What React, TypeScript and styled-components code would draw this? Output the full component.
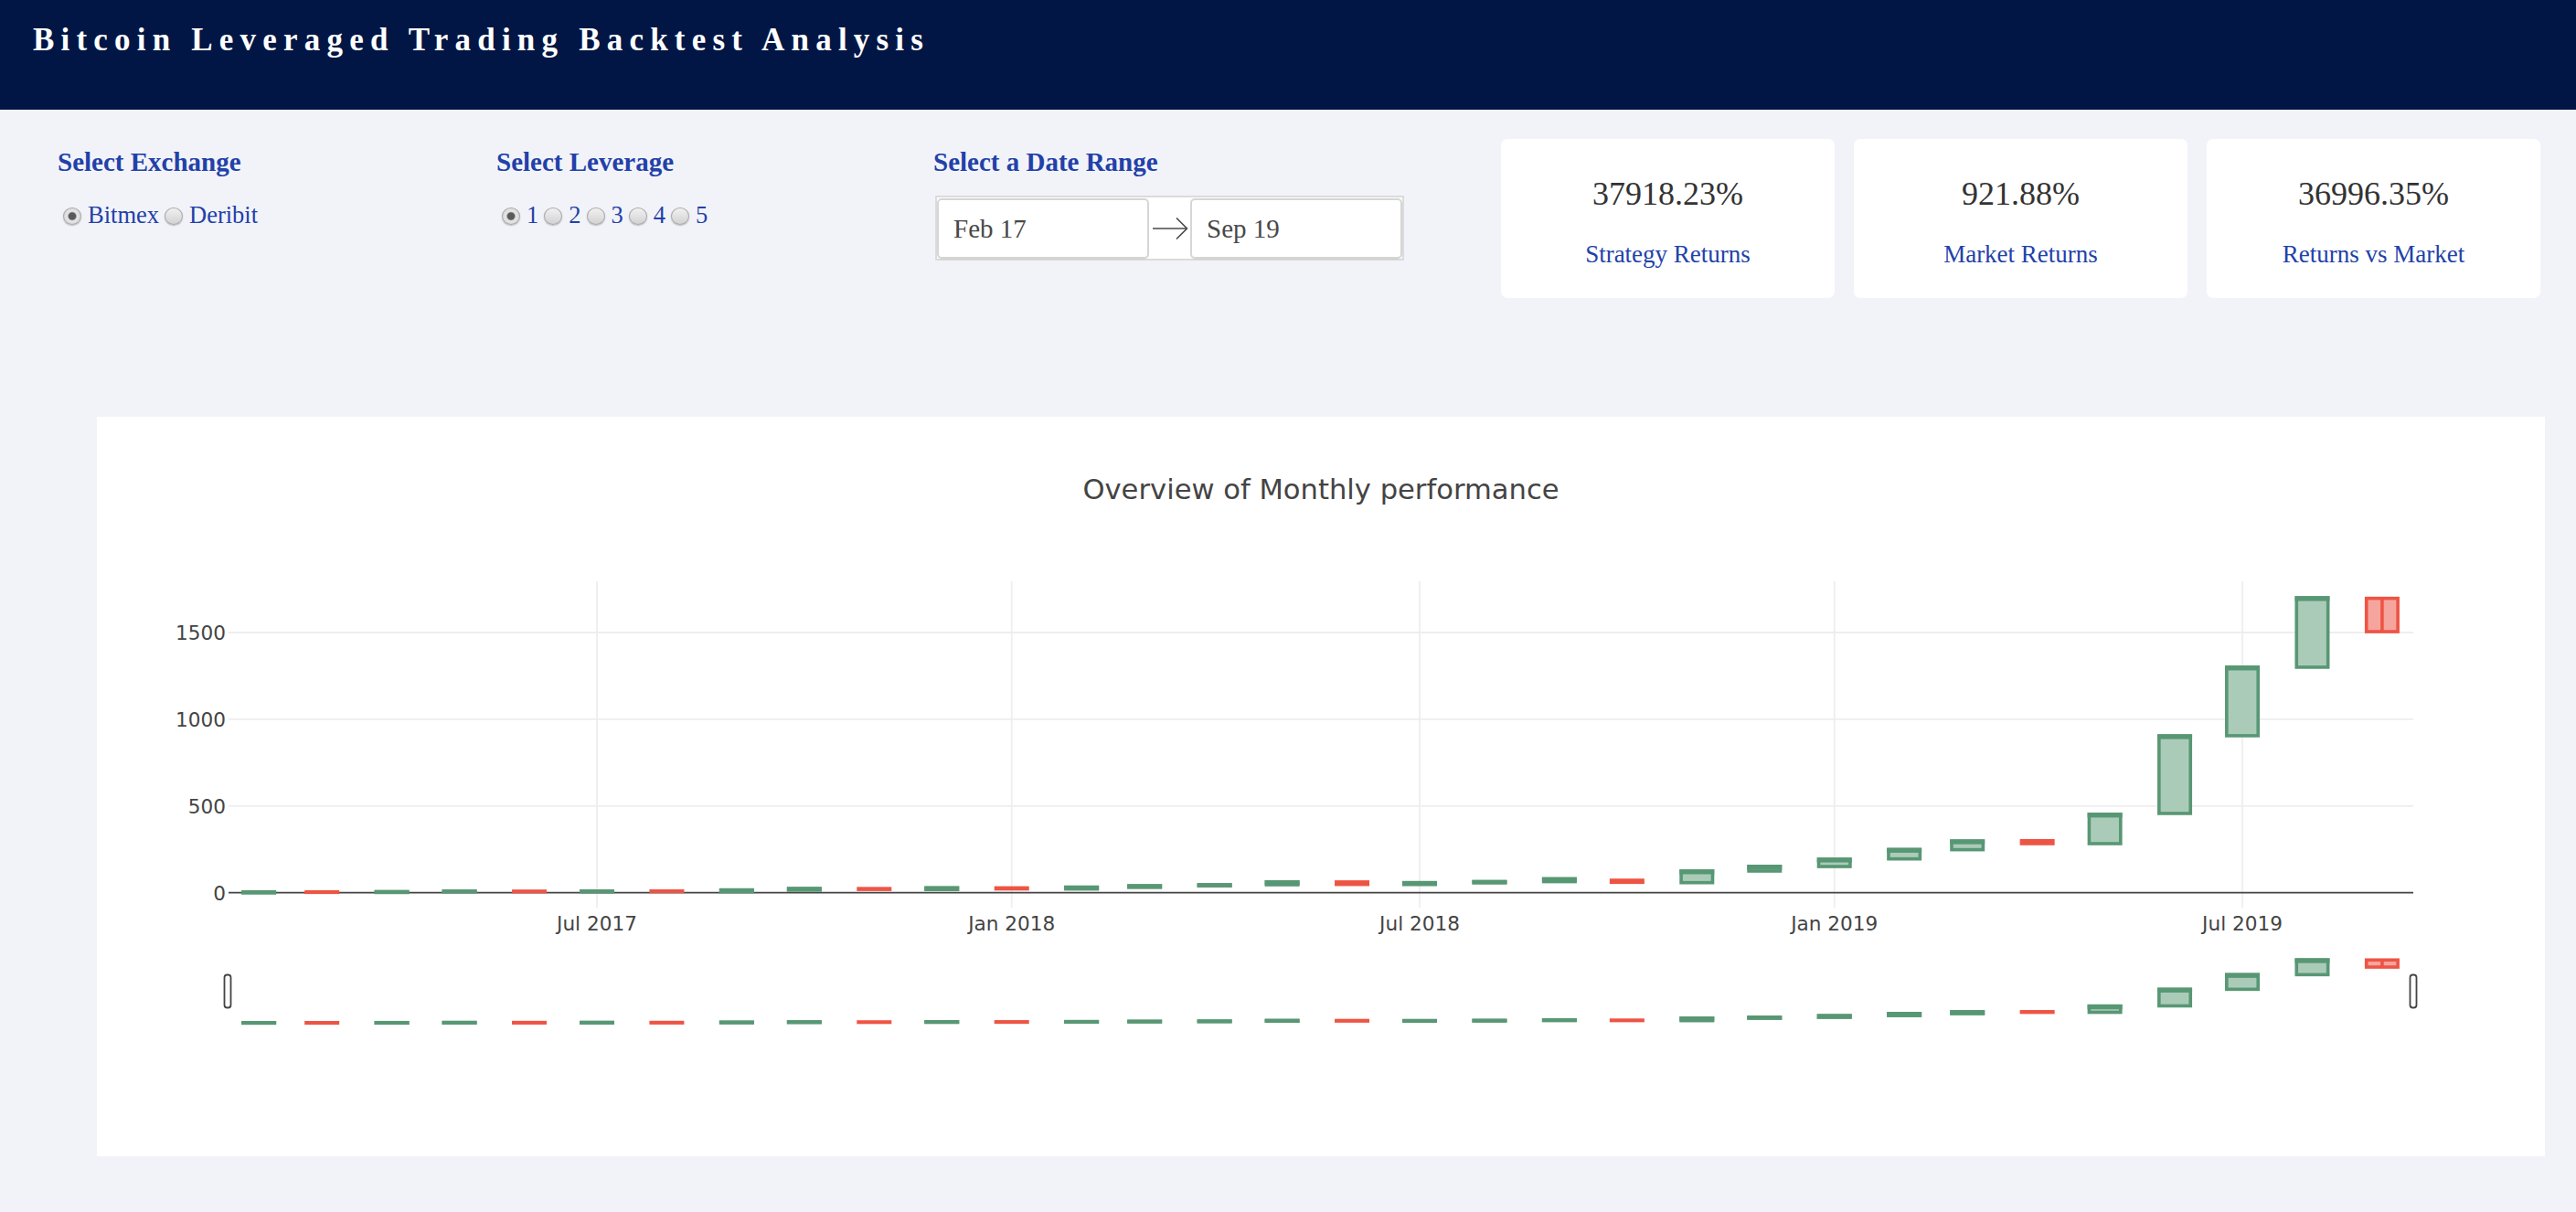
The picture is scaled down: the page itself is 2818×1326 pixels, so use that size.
import React from "react";
import styled, { createGlobalStyle } from "styled-components";

const BLUE = "#2241a9";

const GlobalStyle = createGlobalStyle`
  html, body { margin: 0; padding: 0; background: #f2f3f8; }
  body { font-family: "Liberation Serif", "Times New Roman", serif; }
`;

const Page = styled.div`
  width: 2818px;
  min-height: 1326px;
  background: #f2f3f8;
`;

const Header = styled.header`
  height: 120px;
  box-sizing: border-box;
  background: #011645;
  padding: 26px 0 0 36px;
`;

const Title = styled.h1`
  margin: 0;
  font: bold 35px/35px "Liberation Serif", "Times New Roman", serif;
  letter-spacing: 7.2px;
  color: #ffffff;
`;

const Controls = styled.section`
  display: flex;
  align-items: flex-start;
  padding: 32px 39px 0 63px;
`;

const ControlGroup = styled.div<{ $w: number }>`
  width: ${(p) => p.$w}px;
  flex-shrink: 0;
  padding-top: 11px;
`;

const GroupLabel = styled.div`
  font: bold 29px/29px "Liberation Serif", "Times New Roman", serif;
  color: ${BLUE};
`;

const RadioRow = styled.div`
  display: flex;
  align-items: center;
  margin-top: 30px;
  height: 26px;
`;

const RadioLabel = styled.label`
  display: flex;
  align-items: center;
  font: 26.5px/26px "Liberation Serif", "Times New Roman", serif;
  color: ${BLUE};
`;

const RadioInput = styled.input`
  appearance: none;
  -webkit-appearance: none;
  flex-shrink: 0;
  width: 20px;
  height: 19px;
  margin: 2px 7px 0 6px;
  border-radius: 50%;
  border: 1px solid #a9a9a9;
  box-sizing: border-box;
  background: linear-gradient(#f1f1f1, #d2d2d2);
  box-shadow: 0 1px 1.5px rgba(0, 0, 0, 0.25);
  &:checked {
    background: radial-gradient(circle at 50% 50%, #5a5a5a 0 3.6px, #a0a0a0 4.4px, #e6e6e6 5.2px, #cfcfcf 100%);
  }
`;

const DateBox = styled.div`
  display: flex;
  align-items: center;
  width: 513px;
  height: 71px;
  box-sizing: border-box;
  margin: 22px 0 0 2px;
  border: 2px solid #dbdbdb;
  background: #ffffff;
`;

const DateInput = styled.div`
  width: 232px;
  height: 66px;
  box-sizing: border-box;
  border: 2px solid #d6d6d6;
  border-radius: 5px;
  padding: 2px 0 0 16px;
  display: flex;
  align-items: center;
  font: 29px "Liberation Serif", "Times New Roman", serif;
  color: #484848;
  box-shadow: 0 1px 1px rgba(0, 0, 0, 0.06);
`;

const ArrowCell = styled.div`
  flex: 1;
  display: flex;
  justify-content: center;
  align-items: center;
`;

const Cards = styled.div`
  display: flex;
  gap: 21px;
  margin-left: auto;
`;

const StatCard = styled.div`
  width: 365px;
  height: 174px;
  box-sizing: border-box;
  background: #ffffff;
  border-radius: 7px;
  display: flex;
  flex-direction: column;
  align-items: center;
  padding-top: 42px;
`;

const StatValue = styled.div`
  font: 36px/36px "Liberation Serif", "Times New Roman", serif;
  color: #333333;
`;

const StatLabel = styled.div`
  margin-top: 35px;
  font: 27px/27px "Liberation Serif", "Times New Roman", serif;
  color: ${BLUE};
`;

const ChartPanel = styled.div`
  margin: 130px 0 0 106px;
  width: 2678px;
  height: 809px;
  background: #ffffff;
`;

const ChartSvg = styled.svg`
  display: block;
  font-family: "DejaVu Sans", Verdana, "Open Sans", Arial, sans-serif;
`;

// ---------- chart data ----------
const candles: [number, number][] = [
  [0, 5], [5, 2], [2, 6], [6, 9], [9, 6], [6, 10], [10, 7], [7, 16],
  [16, 24], [24, 19], [19, 28], [28, 22], [22, 32], [32, 40], [40, 46], [46, 62],
  [62, 48], [48, 58], [58, 64], [64, 80], [72, 60], [58, 125], [125, 152], [151, 193],
  [195, 249], [248, 298], [300, 283], [283, 452], [457, 904], [905, 1300], [1300, 1700],
  [1697, 1505],
];

const X0 = 547; // Jul 1 2017
const PX_PER_DAY = 2.4658;
const dayOf = (y: number, m: number) =>
  (Date.UTC(y, m, 1) - Date.UTC(2017, 0, 1)) / 86400000;
const xOf = (y: number, m: number) => X0 + (dayOf(y, m) - 181) * PX_PER_DAY;

const PLOT_L = 144;
const PLOT_R = 2534;
const PLOT_T = 180;
const PLOT_B = 537;
const ZERO_Y = 520.7;
const Y_SCALE = 0.1898;
const MINI_ZERO = 663;
const MINI_SCALE = 0.0405;

const GREEN = "#589774";
const GREEN_FILL = "#abcbb9";
const RED = "#ee5444";
const RED_FILL = "#f5a59e";
const BOX_W = 34.4;
const SW = 3.6;

const Candle: React.FC<{
  cx: number;
  open: number;
  close: number;
  zero: number;
  scale: number;
  split?: boolean;
}> = ({ cx, open, close, zero, scale, split }) => {
  const up = close >= open;
  const yTop = zero - Math.max(open, close) * scale;
  const yBot = zero - Math.min(open, close) * scale;
  const h = Math.max(yBot - yTop, 0.5);
  const stroke = up ? GREEN : RED;
  const fill = up ? GREEN_FILL : RED_FILL;
  return (
    <g>
      <rect
        x={cx - BOX_W / 2}
        y={yTop}
        width={BOX_W}
        height={h}
        fill={fill}
        stroke={stroke}
        strokeWidth={SW}
      />
      {up && (
        <rect x={cx - BOX_W / 2 - SW / 2} y={yTop - SW / 2} width={BOX_W + SW} height={Math.min(5.3, h + SW)} fill={stroke} />
      )}
      {split && <line x1={cx} x2={cx} y1={yTop} y2={yTop + h} stroke={stroke} strokeWidth={SW} />}
    </g>
  );
};

const xTicks = [
  { label: "Jul 2017", x: xOf(2017, 6) },
  { label: "Jan 2018", x: xOf(2018, 0) },
  { label: "Jul 2018", x: xOf(2018, 6) },
  { label: "Jan 2019", x: xOf(2019, 0) },
  { label: "Jul 2019", x: xOf(2019, 6) },
];

const yTicks = [0, 500, 1000, 1500];

const MonthlyChart: React.FC = () => {
  const items = candles.map(([o, c], i) => {
    const y = 2017 + Math.floor((1 + i) / 12);
    const m = (1 + i) % 12;
    return { cx: xOf(y, m), o, c, last: i === candles.length - 1 };
  });
  return (
    <ChartSvg width={2678} height={809} viewBox="0 0 2678 809">
      <text x={1339} y={90} textAnchor="middle" fontSize={30.6} fill="#444">
        Overview of Monthly performance
      </text>
      {xTicks.map((t) => (
        <line key={t.label} x1={t.x} x2={t.x} y1={PLOT_T} y2={PLOT_B} stroke="#eeeeee" strokeWidth={1.8} />
      ))}
      {yTicks.slice(1).map((v) => (
        <line key={v} x1={PLOT_L} x2={PLOT_R} y1={ZERO_Y - v * Y_SCALE} y2={ZERO_Y - v * Y_SCALE} stroke="#eeeeee" strokeWidth={1.8} />
      ))}
      <line x1={PLOT_L} x2={PLOT_R} y1={ZERO_Y} y2={ZERO_Y} stroke="#444" strokeWidth={1.8} />
      {yTicks.map((v) => (
        <text key={v} x={141} y={ZERO_Y - v * Y_SCALE + 7.8} textAnchor="end" fontSize={21.6} fill="#444">
          {v}
        </text>
      ))}
      {xTicks.map((t) => (
        <text key={t.label} x={t.x} y={562} textAnchor="middle" fontSize={21.6} fill="#444">
          {t.label}
        </text>
      ))}
      {items.map((it, i) => (
        <Candle key={i} cx={it.cx} open={it.o} close={it.c} zero={ZERO_Y} scale={Y_SCALE} split={it.last} />
      ))}
      {items.map((it, i) => (
        <Candle key={"m" + i} cx={it.cx} open={it.o} close={it.c} zero={MINI_ZERO} scale={MINI_SCALE} split={it.last} />
      ))}
      <rect x={139.5} y={610.5} width={7} height={36} rx={3} fill="#fff" stroke="#444" strokeWidth={1.8} />
      <rect x={2530.5} y={610.5} width={7} height={36} rx={3} fill="#fff" stroke="#444" strokeWidth={1.8} />
    </ChartSvg>
  );
};

const RangeArrow: React.FC = () => (
  <svg width="40" height="26" viewBox="0 0 40 26">
    <line x1="1" y1="13" x2="38" y2="13" stroke="#484848" strokeWidth="1.6" />
    <polyline points="27,1.5 38.5,13 27,24.5" fill="none" stroke="#484848" strokeWidth="1.6" />
  </svg>
);

const Radio: React.FC<{ name: string; label: string; checked?: boolean }> = ({ name, label, checked }) => (
  <RadioLabel>
    <RadioInput type="radio" name={name} defaultChecked={checked} />
    {label}
  </RadioLabel>
);

export default function App() {
  return (
    <Page>
      <GlobalStyle />
      <Header>
        <Title>Bitcoin Leveraged Trading Backtest Analysis</Title>
      </Header>
      <Controls>
        <ControlGroup $w={480}>
          <GroupLabel>Select Exchange</GroupLabel>
          <RadioRow>
            <Radio name="exchange" label="Bitmex" checked />
            <Radio name="exchange" label="Deribit" />
          </RadioRow>
        </ControlGroup>
        <ControlGroup $w={478}>
          <GroupLabel>Select Leverage</GroupLabel>
          <RadioRow>
            {["1", "2", "3", "4", "5"].map((l) => (
              <Radio key={l} name="leverage" label={l} checked={l === "1"} />
            ))}
          </RadioRow>
        </ControlGroup>
        <ControlGroup $w={619}>
          <GroupLabel>Select a Date Range</GroupLabel>
          <DateBox>
            <DateInput>Feb 17</DateInput>
            <ArrowCell>
              <RangeArrow />
            </ArrowCell>
            <DateInput>Sep 19</DateInput>
          </DateBox>
        </ControlGroup>
        <Cards>
          <StatCard>
            <StatValue>37918.23%</StatValue>
            <StatLabel>Strategy Returns</StatLabel>
          </StatCard>
          <StatCard>
            <StatValue>921.88%</StatValue>
            <StatLabel>Market Returns</StatLabel>
          </StatCard>
          <StatCard>
            <StatValue>36996.35%</StatValue>
            <StatLabel>Returns vs Market</StatLabel>
          </StatCard>
        </Cards>
      </Controls>
      <ChartPanel>
        <MonthlyChart />
      </ChartPanel>
    </Page>
  );
}
